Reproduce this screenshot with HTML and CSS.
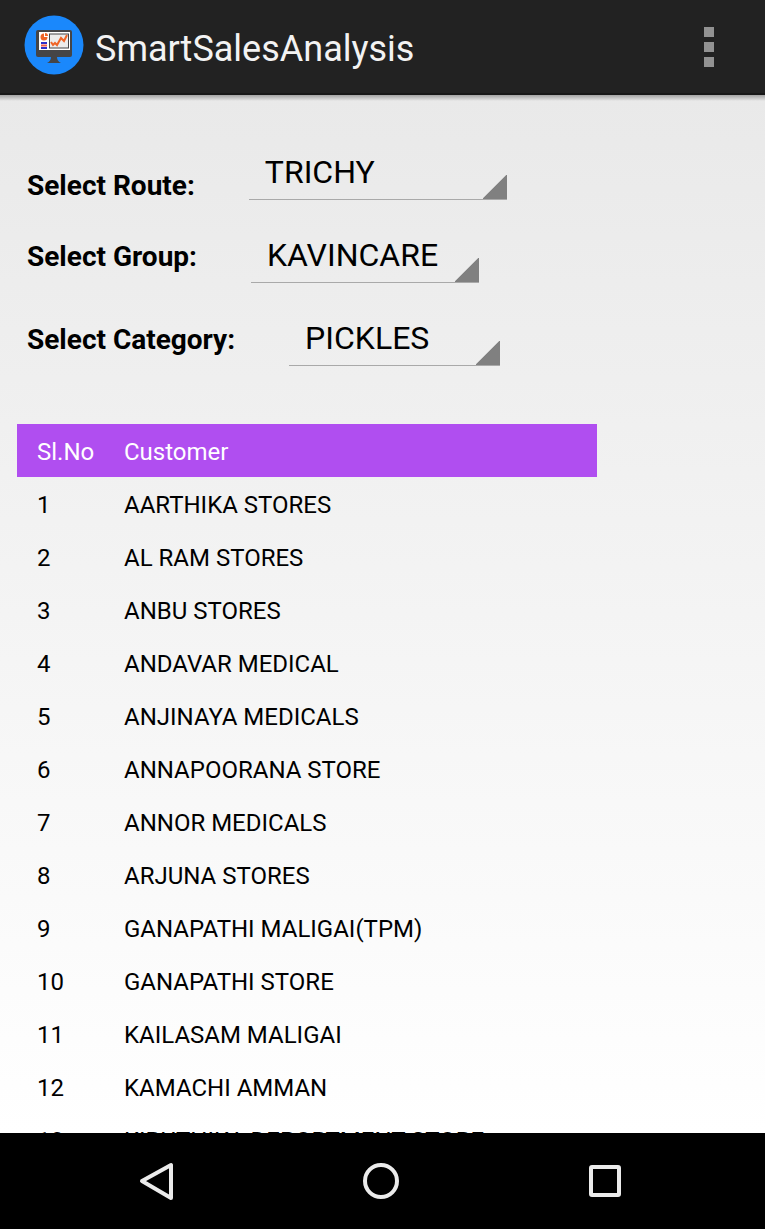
FILE: index.html
```
<!DOCTYPE html>
<html lang="en">
<head>
  <meta charset="UTF-8">
  <meta name="viewport" content="width=device-width, initial-scale=1.0">
  <title>SmartSalesAnalysis</title>
  <link rel="stylesheet" href="styles.css">
</head>
<body>

  <!-- HEADER -->
  <header>
    <svg class="logo" viewBox="0 0 60 60" aria-hidden="true">
      <circle cx="30" cy="30" r="29.5" fill="#1a88fc"/>
      <rect x="12" y="15" width="36" height="27" rx="2" fill="#454547"/>
      <path d="M27 42h6q0 4 4 6H23q4-2 4-6z" fill="#454547"/>
      <rect x="15" y="17" width="31" height="18" fill="#fff"/>
      <rect x="25.5" y="19" width="19" height="14" fill="#ececec" stroke="#454547"/>
      <path d="M20 18.500a3.500 3.500 0 1 0 3.500 3.500H20z" fill="#ef6426"/>
      <path d="M21 18a3 3 0 0 1 3 3h-3z" fill="#ef6426"/>
      <path d="M17 28h6M17 33h6" stroke="#3030c8" stroke-width="2"/>
      <path d="M17 30.500h6" stroke="#ef5b4a" stroke-width="2"/>
      <path d="M27 27l2 3 2-2 2 2 4-7 3 3 3-6" fill="none" stroke="#ef6426" stroke-width="2"/>
    </svg>
    <h1>SmartSalesAnalysis</h1>
    <button class="menu-btn" aria-label="More options">
      <span></span><span></span><span></span>
    </button>
  </header>

  <main>
    <!-- FILTERS -->
    <form class="filters">
      <div class="field field-low">
        <label for="route">Select Route:</label>
        <select id="route" class="route">
          <option>TRICHY</option>
        </select>
      </div>
      <div class="field">
        <label for="group">Select Group:</label>
        <select id="group" class="group">
          <option>KAVINCARE</option>
        </select>
      </div>
      <div class="field">
        <label for="category">Select Category:</label>
        <select id="category" class="category">
          <option>PICKLES</option>
        </select>
      </div>
    </form>

    <!-- CUSTOMER LIST -->
    <table class="customers">
      <thead>
        <tr><th class="num">Sl.No</th><th>Customer</th></tr>
      </thead>
      <tbody>
        <tr><td>1</td><td>AARTHIKA STORES</td></tr>
        <tr><td>2</td><td>AL RAM STORES</td></tr>
        <tr><td>3</td><td>ANBU STORES</td></tr>
        <tr><td>4</td><td>ANDAVAR MEDICAL</td></tr>
        <tr><td>5</td><td>ANJINAYA MEDICALS</td></tr>
        <tr><td>6</td><td>ANNAPOORANA STORE</td></tr>
        <tr><td>7</td><td>ANNOR MEDICALS</td></tr>
        <tr><td>8</td><td>ARJUNA STORES</td></tr>
        <tr><td>9</td><td>GANAPATHI MALIGAI(TPM)</td></tr>
        <tr><td>10</td><td>GANAPATHI STORE</td></tr>
        <tr><td>11</td><td>KAILASAM MALIGAI</td></tr>
        <tr><td>12</td><td>KAMACHI AMMAN</td></tr>
        <tr><td>13</td><td>KIRUTHIKA DEPORTMENT STORE</td></tr>
      </tbody>
    </table>
  </main>

  <!-- NAVIGATION BAR -->
  <nav class="navbar">
    <button aria-label="Back">
      <svg viewBox="0 0 40 40"><path d="M34 4v33L5 20z"/></svg>
    </button>
    <button aria-label="Home">
      <svg viewBox="0 0 40 40"><circle cx="20" cy="20" r="16"/></svg>
    </button>
    <button aria-label="Recent apps">
      <svg viewBox="0 0 40 40"><rect x="6" y="6" width="28" height="28" rx="1"/></svg>
    </button>
  </nav>

</body>
</html>
```

FILE: styles.css
```
/* ===== GENERAL ===== */
* {
  box-sizing: border-box;
}
body {
  margin: 0;
  height: 100vh;
  display: flex;
  flex-direction: column;
  overflow: hidden;
  font-family: Roboto, sans-serif;
  color: #000;
  background: #000;
}
button {
  border: none;
  padding: 0;
  background: none;
  cursor: pointer;
}

/* ===== HEADER ===== */
header {
  display: flex;
  align-items: center;
  flex-shrink: 0;
  height: 95px;
  padding: 0 48px 0 24px;
  background: #222;
  border-bottom: 2px solid #181818;
}
.logo {
  width: 60px;
  height: 60px;
  margin: 0 11px 4px 0;
}
header h1 {
  flex: 1;
  margin: 4px 0 0;
  font-size: 36px;
  font-weight: 400;
  color: #f3f3f3;
}
.menu-btn {
  display: flex;
  flex-direction: column;
  gap: 5px;
  padding: 0 3px;
}
.menu-btn span {
  width: 10px;
  height: 10px;
  background: #929292;
}

/* ===== CONTENT ===== */
main {
  flex: 1;
  min-height: 0;
  overflow: hidden;
  padding: 49px 17px 0;
  background:
    linear-gradient(rgba(0, 0, 0, 0.3), transparent) top / 100% 6px no-repeat,
    linear-gradient(#e9e9e9, #fff);
}

/* ===== FILTERS ===== */
.filters {
  display: flex;
  flex-direction: column;
  gap: 27px;
  padding-left: 10px;
}
.field {
  display: flex;
  align-items: center;
  gap: 54px;
}
.field-low {
  align-items: flex-end;
}
.field label {
  padding-top: 4px;
  font-size: 28px;
  line-height: 28px;
  font-weight: 700;
}
.field select {
  appearance: none;
  height: 56px;
  padding: 0 16px;
  border: none;
  border-bottom: 1px solid #a9a9a9;
  border-radius: 0;
  font-family: inherit;
  font-size: 32px;
  color: #000;
  background: linear-gradient(135deg, transparent calc(50% - 1px), #808080 50%) right bottom / 24px 24px no-repeat;
}
.field .route {
  width: 258px;
}
.field .group {
  width: 228px;
}
.field .category {
  width: 211px;
}

/* ===== CUSTOMER TABLE ===== */
.customers {
  width: 580px;
  max-width: 100%;
  margin-top: 58px;
  border-collapse: collapse;
  font-size: 24px;
}
.customers th, .customers td {
  height: 53px;
  padding: 3px 0 0 20px;
  text-align: left;
  font-weight: 400;
}
.customers th {
  background: #b04ef0;
  color: #fff;
}
.customers .num {
  width: 87px;
}

/* ===== NAVIGATION BAR ===== */
.navbar {
  display: flex;
  flex-shrink: 0;
  justify-content: center;
  gap: 184px;
  height: 96px;
  padding-right: 4px;
  background: #000;
}
.navbar svg {
  display: block;
  width: 40px;
  height: 40px;
  fill: none;
  stroke: #ebebeb;
  stroke-width: 4;
  stroke-linejoin: round;
}
```
